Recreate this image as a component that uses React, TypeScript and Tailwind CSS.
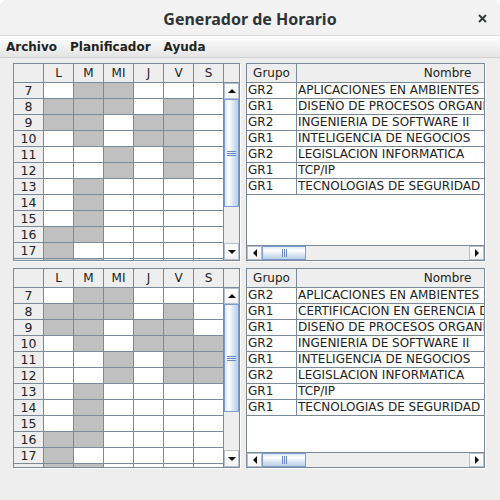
import React from 'react'

const DAYS = ['L', 'M', 'MI', 'J', 'V', 'S']

const SCHEDULE_TOP = ['011000', '111010', '110110', '010110', '001010', '001010', '010000', '010000', '010000', '110000', '100000', '110000']
const SCHEDULE_BOTTOM = ['011000', '111010', '110110', '010111', '001011', '001011', '010000', '010000', '010000', '110000', '100000', '110000']

const COURSES_TOP = [
  ['GR2', 'APLICACIONES EN AMBIENTES DISTRIBUIDOS'],
  ['GR1', 'DISEÑO DE PROCESOS ORGANIZACIONALES'],
  ['GR2', 'INGENIERIA DE SOFTWARE II'],
  ['GR1', 'INTELIGENCIA DE NEGOCIOS'],
  ['GR2', 'LEGISLACION INFORMATICA'],
  ['GR1', 'TCP/IP'],
  ['GR1', 'TECNOLOGIAS DE SEGURIDAD'],
]

const COURSES_BOTTOM = [
  ['GR2', 'APLICACIONES EN AMBIENTES DISTRIBUIDOS'],
  ['GR1', 'CERTIFICACION EN GERENCIA DE PROYECTOS'],
  ['GR1', 'DISEÑO DE PROCESOS ORGANIZACIONALES'],
  ['GR2', 'INGENIERIA DE SOFTWARE II'],
  ['GR1', 'INTELIGENCIA DE NEGOCIOS'],
  ['GR2', 'LEGISLACION INFORMATICA'],
  ['GR1', 'TCP/IP'],
  ['GR1', 'TECNOLOGIAS DE SEGURIDAD'],
]

function Arrow({ dir }: { dir: 'up' | 'down' | 'left' | 'right' }) {
  if (dir === 'up' || dir === 'down') {
    return (
      <svg width="8" height="4" viewBox="0 0 8 4">
        <polygon points={dir === 'up' ? '0,4 8,4 4,0' : '0,0 8,0 4,4'} fill="#111" />
      </svg>
    )
  }
  return (
    <svg width="4" height="8" viewBox="0 0 4 8">
      <polygon points={dir === 'left' ? '4,0 4,8 0,4' : '0,0 0,8 4,4'} fill="#111" />
    </svg>
  )
}

function VScroll() {
  return (
    <div className="flex w-[15px] shrink-0 flex-col bg-[#eeeeee]">
      <div className="flex h-[16px] shrink-0 items-center justify-center border border-[#b5c0cc] bg-[linear-gradient(to_bottom,#ffffff,#f3f3f3)]">
        <Arrow dir="up" />
      </div>
      <div className="flex h-[108px] shrink-0 items-center justify-center border border-[#7d9bcf] bg-[linear-gradient(to_right,#dde8f3,#ffffff_30%,#dde8f3_60%,#b8cfe5)]">
        <svg width="9" height="5" viewBox="0 0 9 5">
          <line x1="0" y1="0.5" x2="9" y2="0.5" stroke="#6a88c0" />
          <line x1="0" y1="2.5" x2="9" y2="2.5" stroke="#6a88c0" />
          <line x1="0" y1="4.5" x2="9" y2="4.5" stroke="#6a88c0" />
        </svg>
      </div>
      <div className="flex-1" />
      <div className="flex h-[17px] shrink-0 items-center justify-center border border-[#b5c0cc] bg-[linear-gradient(to_bottom,#ffffff,#f3f3f3)]">
        <Arrow dir="down" />
      </div>
    </div>
  )
}

function HScroll() {
  return (
    <div className="flex h-[15px] shrink-0 border-t border-[#7a8a99] bg-[#eeeeee]">
      <div className="flex w-[15px] items-center justify-center border border-[#b5c0cc] bg-[linear-gradient(to_bottom,#ffffff,#f3f3f3)]">
        <Arrow dir="left" />
      </div>
      <div className="flex w-[44px] items-center justify-center border border-[#7d9bcf] bg-[linear-gradient(to_bottom,#dde8f3,#ffffff_30%,#dde8f3_60%,#b8cfe5)]">
        <svg width="5" height="8" viewBox="0 0 5 8">
          <line x1="0.5" y1="0" x2="0.5" y2="8" stroke="#6a88c0" />
          <line x1="2.5" y1="0" x2="2.5" y2="8" stroke="#6a88c0" />
          <line x1="4.5" y1="0" x2="4.5" y2="8" stroke="#6a88c0" />
        </svg>
      </div>
      <div className="flex-1" />
      <div className="flex w-[15px] items-center justify-center border border-[#b5c0cc] bg-[linear-gradient(to_bottom,#ffffff,#f3f3f3)]">
        <Arrow dir="right" />
      </div>
    </div>
  )
}

function Schedule({ rows, height }: { rows: string[]; height: string }) {
  return (
    <div className={`flex w-[227px] shrink-0 flex-col border border-[#7a8a99] bg-white shadow-[1px_1px_0_#ffffff] ${height}`}>
      <div className="flex h-[19px] shrink-0">
        <div className="w-[30px] border-r border-b border-[#7a8a99] bg-[#eeeeee]" />
        {DAYS.map((d) => (
          <div key={d} className="w-[30px] border-r border-b border-[#7a8a99] bg-[#eeeeee] pt-[2px] text-center leading-[15px]">
            {d}
          </div>
        ))}
        <div className="flex-1 border-b border-[#7a8a99] bg-[#eeeeee]" />
      </div>
      <div className="flex min-h-0 flex-1">
        <div className="w-[210px] overflow-hidden">
          {rows.map((r, i) => (
            <div key={i} className="flex h-[16px]">
              {/* the last row only peeks in at the bottom edge, its number is not visible */}
              <div className="w-[30px] border-r border-b border-[#7a8a99] bg-[#eeeeee] text-center text-[12.5px] leading-[15px]">
                {i < rows.length - 1 ? i + 7 : ''}
              </div>
              {r.split('').map((c, j) => (
                <div
                  key={j}
                  className={c === '1' ? 'w-[30px] border-r border-b border-[#7a8a99] bg-[#c0c0c0]' : 'w-[30px] border-r border-b border-[#7a8a99] bg-white'}
                />
              ))}
            </div>
          ))}
        </div>
        <VScroll />
      </div>
    </div>
  )
}

function Courses({ rows, height }: { rows: string[][]; height: string }) {
  return (
    <div className={`flex w-[239px] shrink-0 flex-col border border-[#7a8a99] bg-white shadow-[1px_1px_0_#ffffff] ${height}`}>
      <div className="min-h-0 flex-1 overflow-hidden">
        <div className="w-[352px]">
          <div className="flex h-[19px]">
            <div className="w-[50px] border-r border-b border-[#7a8a99] bg-[#eeeeee] pt-[2px] text-center leading-[15px]">Grupo</div>
            <div className="w-[302px] border-r border-b border-[#7a8a99] bg-[#eeeeee] pt-[2px] text-center leading-[15px]">Nombre</div>
          </div>
          {rows.map(([g, n], i) => (
            <div key={i} className="flex h-[16px]">
              <div className="w-[50px] border-r border-b border-[#7a8a99] pl-[1px] leading-[14px]">{g}</div>
              <div className="w-[302px] overflow-hidden whitespace-nowrap border-r border-b border-[#7a8a99] pl-[1px] leading-[14px]">{n}</div>
            </div>
          ))}
        </div>
      </div>
      <HScroll />
    </div>
  )
}

export default function App() {
  return (
    <div className="flex h-[500px] w-[500px] flex-col overflow-hidden rounded-t-[7px] bg-[#eeeeee] font-['DejaVu_Sans',sans-serif] text-[12px] text-[#222222]">
      {/* title bar */}
      <div className="relative flex h-[36px] shrink-0 items-center justify-center border-b border-[#dadada] bg-[#f2f2f2] pt-[3px]">
        <span className="font-['Noto_Sans',sans-serif] text-[16px] font-bold text-[#2e3436]">Generador de Horario</span>
        <svg className="absolute right-[13px] top-[14px]" width="9" height="9" viewBox="0 0 9 9">
          <line x1="1" y1="1" x2="8" y2="8" stroke="#2e3436" strokeWidth="1.8" />
          <line x1="8" y1="1" x2="1" y2="8" stroke="#2e3436" strokeWidth="1.8" />
        </svg>
      </div>

      {/* menu bar */}
      <div className="flex h-[22px] shrink-0 items-center gap-[13px] border-b border-[#d0d0d0] bg-[linear-gradient(to_bottom,#ffffff,#e4e4e4)] pl-[6px] font-bold text-[#222222]">
        <span>Archivo</span>
        <span>Planificador</span>
        <span>Ayuda</span>
      </div>

      {/* content */}
      <div className="flex flex-col gap-[7px] pt-[5px] pl-[13px]">
        <div className="flex gap-[6px]">
          <Schedule rows={SCHEDULE_TOP} height="h-[198px]" />
          <Courses rows={COURSES_TOP} height="h-[198px]" />
        </div>
        <div className="flex gap-[6px]">
          <Schedule rows={SCHEDULE_BOTTOM} height="h-[200px]" />
          <Courses rows={COURSES_BOTTOM} height="h-[200px]" />
        </div>
      </div>
    </div>
  )
}
